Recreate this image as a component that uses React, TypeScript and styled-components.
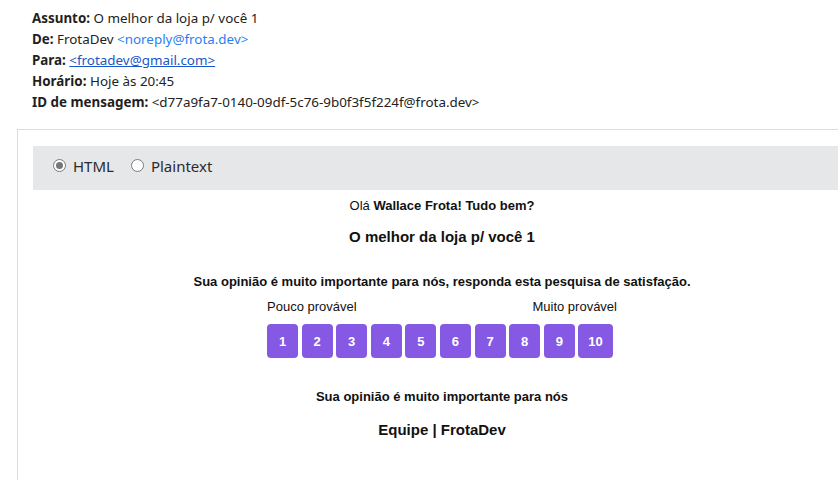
import React, { useState } from 'react';
import styled, { createGlobalStyle } from 'styled-components';

const GlobalStyle = createGlobalStyle`
  html, body {
    margin: 0;
    padding: 0;
    background: #ffffff;
    overflow: hidden;
  }
  body {
    font-family: "Noto Sans", "Open Sans", sans-serif;
  }
`;

// cabeçalho do e-mail
const Header = styled.div`
  padding: 8px 0 0 32px;
  font-size: 13.4px;
  line-height: 21px;
  color: #222222;
`;

const HeaderRow = styled.div`
  white-space: nowrap;
`;

const Label = styled.b`
  font-weight: 700;
  color: #1f1f1f;
`;

const Mail = styled.a<{ $underline?: boolean }>`
  color: ${(p) => (p.$underline ? '#1a56c8' : '#2a7ff0')};
  text-decoration: ${(p) => (p.$underline ? 'underline' : 'none')};
`;

const Panel = styled.div`
  box-sizing: border-box;
  width: 849px;
  min-height: 400px;
  margin: 16px 0 0 17px;
  padding: 16px 15px;
  border-top: 1px solid #dcdbe6;
  border-left: 1px solid #dcdbe6;
`;

const ModeBar = styled.div`
  box-sizing: border-box;
  display: flex;
  align-items: center;
  height: 44px;
  padding: 0 0 5px 20px;
  background: #e6e7e9;
  font-size: 15px;
  color: #2b2b2b;
`;

const ModeOption = styled.label`
  display: flex;
  align-items: center;
  gap: 7px;
  margin-right: 17px;
  cursor: pointer;
`;

const RadioDot = styled.span<{ $checked: boolean }>`
  box-sizing: border-box;
  width: 13px;
  height: 13px;
  border-radius: 50%;
  border: 1px solid #7a7a7a;
  background: #ffffff;
  display: flex;
  align-items: center;
  justify-content: center;

  &::after {
    content: '';
    width: 7px;
    height: 7px;
    border-radius: 50%;
    background: ${(p) => (p.$checked ? '#777777' : 'transparent')};
  }
`;

// corpo da mensagem
const MailBody = styled.div`
  display: flex;
  flex-direction: column;
  align-items: center;
  font-family: "Liberation Sans", Arial, sans-serif;
  color: #111111;
  text-align: center;
`;

const Text = styled.div<{ $size?: number; $bold?: boolean; $top: number }>`
  font-size: ${(p) => p.$size ?? 13}px;
  line-height: ${(p) => (p.$size ?? 13) + 2}px;
  font-weight: ${(p) => (p.$bold ? 700 : 400)};
  margin-top: ${(p) => p.$top}px;
`;

const Scale = styled.div`
  width: 350px;
  margin-top: 10px;
`;

const ScaleLabels = styled.div`
  display: flex;
  justify-content: space-between;
  font-size: 13px;
  line-height: 15px;
  color: #111111;
`;

const Buttons = styled.div`
  display: flex;
  margin-top: 10px;
`;

const ScoreButton = styled.a`
  box-sizing: border-box;
  min-width: 31px;
  height: 34px;
  padding: 0 10px;
  margin-right: 3.6px;
  border-radius: 4px;
  background: #8559e3;
  color: #ffffff;
  font-size: 13px;
  font-weight: 700;
  display: flex;
  align-items: center;
  justify-content: center;
  text-decoration: none;
  cursor: pointer;
`;

export default function App() {
  const [mode, setMode] = useState<'html' | 'plain'>('html');

  return (
    <>
      <GlobalStyle />
      <Header>
        <HeaderRow>
          <Label>Assunto:</Label> O melhor da loja p/ você 1
        </HeaderRow>
        <HeaderRow>
          <Label>De:</Label> FrotaDev <Mail>&lt;noreply@frota.dev&gt;</Mail>
        </HeaderRow>
        <HeaderRow>
          <Label>Para:</Label> <Mail $underline>&lt;frotadev@gmail.com&gt;</Mail>
        </HeaderRow>
        <HeaderRow>
          <Label>Horário:</Label> Hoje às 20:45
        </HeaderRow>
        <HeaderRow>
          <Label>ID de mensagem:</Label> &lt;d77a9fa7-0140-09df-5c76-9b0f3f5f224f@frota.dev&gt;
        </HeaderRow>
      </Header>

      <Panel>
        <ModeBar>
          <ModeOption onClick={() => setMode('html')}>
            <RadioDot $checked={mode === 'html'} />
            HTML
          </ModeOption>
          <ModeOption onClick={() => setMode('plain')}>
            <RadioDot $checked={mode === 'plain'} />
            Plaintext
          </ModeOption>
        </ModeBar>

        <MailBody>
          <Text $top={8}>
            Olá <b>Wallace Frota!</b> <b>Tudo bem?</b>
          </Text>
          <Text $top={15} $size={15} $bold>
            O melhor da loja p/ você 1
          </Text>
          <Text $top={29} $bold>
            Sua opinião é muito importante para nós, responda esta pesquisa de satisfação.
          </Text>
          <Scale>
            <ScaleLabels>
              <span>Pouco provável</span>
              <span>Muito provável</span>
            </ScaleLabels>
            <Buttons>
              {[1, 2, 3, 4, 5, 6, 7, 8, 9, 10].map((n) => (
                <ScoreButton key={n}>{n}</ScoreButton>
              ))}
            </Buttons>
          </Scale>
          <Text $top={31} $bold>
            Sua opinião é muito importante para nós
          </Text>
          <Text $top={17} $size={15} $bold>
            Equipe | FrotaDev
          </Text>
        </MailBody>
      </Panel>
    </>
  );
}
